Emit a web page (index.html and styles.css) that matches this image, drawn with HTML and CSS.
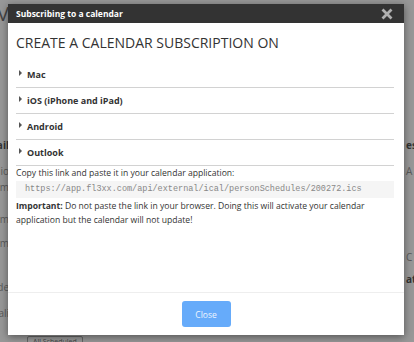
FILE: index.html
```html
<!DOCTYPE html>
<html>
<head>
<meta charset="utf-8">
<link rel="stylesheet" href="styles.css">
</head>
<body>
<div class="page">
  <div class="side left">
    <div class="frag big" style="height:28px">V</div>
    <div class="frag" style="height:110px"></div>
    <div class="frag b" style="height:26px">ail</div>
    <div class="frag" style="height:16px">io</div>
    <div class="frag" style="height:32px">m</div>
    <div class="frag" style="height:24px">m</div>
    <div class="frag" style="height:44px">m</div>
    <div class="frag" style="height:26px">de</div>
    <div class="frag" style="height:22px">ali</div>
  </div>
  <div class="center">
    <div class="ghostbtn">All Scheduled</div>
  </div>
  <div class="side right">
    <div class="frag" style="height:138px"></div>
    <div class="frag b" style="height:26px">ess</div>
    <div class="frag" style="height:86px">A</div>
    <div class="frag" style="height:22px">C</div>
    <div class="frag b" style="height:22px">at</div>
  </div>
</div>

<div class="modal">
  <div class="modal-header">
    <span class="modal-title">Subscribing to a calendar</span>
    <svg class="close-x" width="12" height="12" viewBox="0 0 12 12" aria-label="close">
      <path d="M1.5 1.5 L10.5 10.5 M10.5 1.5 L1.5 10.5" stroke="#b0b0b0" stroke-width="2.8" stroke-linecap="butt"/>
    </svg>
  </div>
  <div class="modal-body">
    <h1 class="heading">CREATE A CALENDAR SUBSCRIPTION ON</h1>
    <div class="item"><span class="tri"></span>Mac</div>
    <div class="item"><span class="tri"></span>iOS (iPhone and iPad)</div>
    <div class="item"><span class="tri"></span>Android</div>
    <div class="item"><span class="tri"></span>Outlook</div>
    <p class="copy">Copy this link and paste it in your calendar application:</p>
    <div class="code">https://app.fl3xx.com/api/external/ical/personSchedules/200272.ics</div>
    <p class="note"><b>Important:</b> Do not paste the link in your browser. Doing this will activate your calendar application but the calendar will not update!</p>
  </div>
  <div class="modal-footer">
    <button class="btn">Close</button>
  </div>
</div>
</body>
</html>
```
FILE: styles.css
```css
html, body {
  margin: 0;
  padding: 0;
  width: 414px;
  height: 342px;
  overflow: hidden;
  background: #989898;
  font-family: "Open Sans", "Liberation Sans", sans-serif;
}
.page {
  display: flex;
  justify-content: space-between;
  height: 342px;
  color: #5a5a5a;
}
.side {
  width: 14px;
  display: flex;
  flex-direction: column;
  font-size: 10px;
}
.left { text-align: right; margin-left: -5px; }
.right { text-align: left; margin-right: -6px; }
.frag { line-height: 14px; white-space: nowrap; }
.frag.b { font-weight: 700; color: #333; }
.frag.big { font-size: 20px; line-height: 28px; color: #444; }
.center {
  flex: 1;
  display: flex;
  align-items: flex-end;
  padding-left: 18px;
}
.ghostbtn {
  border: 1px solid #666;
  border-radius: 2px;
  font-size: 7px;
  line-height: 9px;
  padding: 0 5px;
  height: 9px;
  margin-bottom: -5px;
  color: #444;
}

.modal {
  position: absolute;
  left: 8px;
  top: 4px;
  width: 396px;
  height: 331px;
  background: #fff;
  display: flex;
  flex-direction: column;
  box-shadow: 0 2px 8px rgba(0,0,0,0.45);
}
.modal-header {
  height: 19px;
  flex: none;
  background: #333;
  display: flex;
  align-items: center;
  justify-content: space-between;
  padding: 0 11px 0 8px;
}
.modal-title {
  color: #fff;
  font-weight: 700;
  font-size: 8.5px;
}
.close-x { display: block; }
.modal-body {
  flex: 1;
  padding: 11px 10px 0 8px;
  color: #333;
}
.heading {
  margin: 0 0 10px;
  font-size: 14px;
  font-weight: 400;
  line-height: 18px;
}
.item {
  display: flex;
  align-items: center;
  height: 25px;
  border-bottom: 1.5px solid #d2d2d2;
  font-size: 9px;
  font-weight: 700;
  color: #333;
}
.tri {
  width: 0;
  height: 0;
  border-top: 3px solid transparent;
  border-bottom: 3px solid transparent;
  border-left: 3.5px solid #555;
  margin: 0 5px 3px 3px;
}
.copy {
  margin: 0;
  font-size: 8.6px;
  line-height: 14px;
}
.code {
  margin-top: 1px;
  background: #f5f5f5;
  font-family: "Liberation Mono", monospace;
  font-size: 8.5px;
  color: #888;
  height: 17px;
  line-height: 17px;
  padding-left: 9px;
}
.note {
  margin: 1px 0 0;
  font-size: 8.6px;
  line-height: 14px;
}
.modal-footer {
  border-top: 1px solid #eee;
  height: 42px;
  flex: none;
  display: flex;
  align-items: center;
  justify-content: center;
}
.btn {
  background: #66abfa;
  color: #eef5ff;
  border: 0;
  border-radius: 3px;
  width: 49px;
  height: 26px;
  padding: 0;
  font-family: "Open Sans", sans-serif;
  font-size: 8.5px;
}
```
